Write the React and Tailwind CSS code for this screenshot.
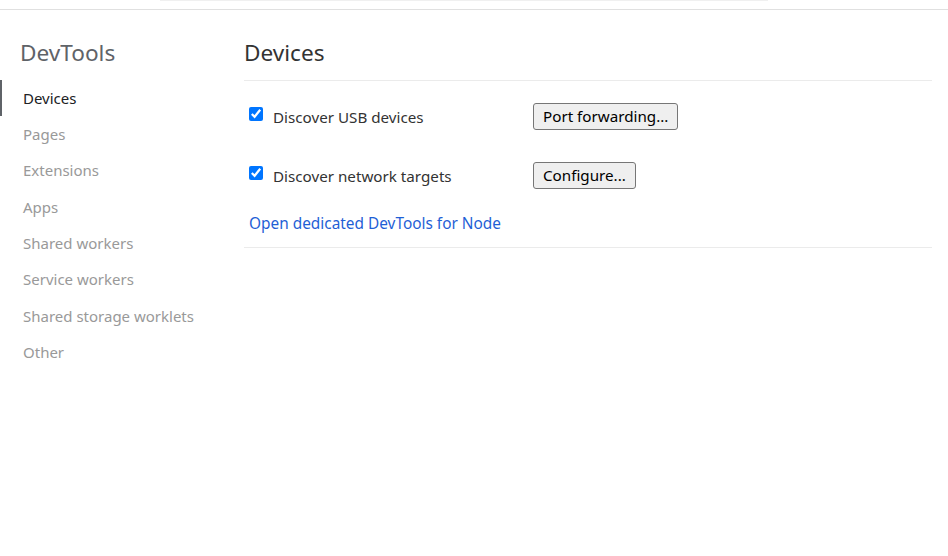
import { useState } from "react";

const navItems = [
    "Devices",
    "Pages",
    "Extensions",
    "Apps",
    "Shared workers",
    "Service workers",
    "Shared storage worklets",
    "Other",
];

function Sidebar() {
    const [active, setActive] = useState("Devices");

    return (
        <aside className="w-[244px] shrink-0 flex flex-col">
            <h1 className="pl-[20px] pt-[28px] mb-[12px] text-[22.6px] leading-[30px] font-normal text-[#5f6368]">
                DevTools
            </h1>
            <nav className="flex flex-col">
                {navItems.map((name) => (
                    <button
                        key={name}
                        onClick={() => setActive(name)}
                        className={
                            "h-[36.3px] pl-[21px] text-left text-[15px] border-l-2 cursor-pointer " +
                            (active === name ? "border-[#5f6368] text-[#202124]" : "border-transparent text-[#999999]")
                        }
                    >
                        {name}
                    </button>
                ))}
            </nav>
        </aside>
    );
}

function Row({ label, action }) {
    return (
        <div className="flex items-center h-[27px]">
            <label className="w-[284px] flex items-center text-[15.2px] text-[#333333]">
                <input type="checkbox" defaultChecked className="w-[14px] h-[14px] mr-[10px] -mt-[5px] accent-[#0075ff]" />
                <span className="pt-[2px]">{label}</span>
            </label>
            <button className="h-[27px] px-[9px] bg-[#efefef] border border-[#767676] rounded-[3px] text-[15.2px] text-black">
                {action}
            </button>
        </div>
    );
}

export default function App() {
    return (
        <div className="w-[948px] h-[556px] bg-white font-['Segoe_UI','Noto_Sans',sans-serif] overflow-hidden">
            <div className="h-[10px] border-b border-[#e0e0e0] pl-[160px]">
                <div className="w-[608px] h-px bg-[#f0f0f0]" />
            </div>
            <div className="flex">
                <Sidebar />
                <main className="flex-1 mr-[16px]">
                    <h2 className="pt-[28px] pb-[12px] text-[22.6px] leading-[30px] font-normal text-[#333333] border-b border-[#ebebeb]">
                        Devices
                    </h2>
                    <div className="pl-[5px] pt-[22px] pb-[13px] border-b border-[#ebebeb] flex flex-col">
                        <Row label="Discover USB devices" action="Port forwarding..." />
                        <div className="h-[32px]" />
                        <Row label="Discover network targets" action="Configure..." />
                        <a href="#" className="mt-[25px] text-[15.4px] leading-[20px] text-[#1f5fd6]">
                            Open dedicated DevTools for Node
                        </a>
                    </div>
                </main>
            </div>
        </div>
    );
}
